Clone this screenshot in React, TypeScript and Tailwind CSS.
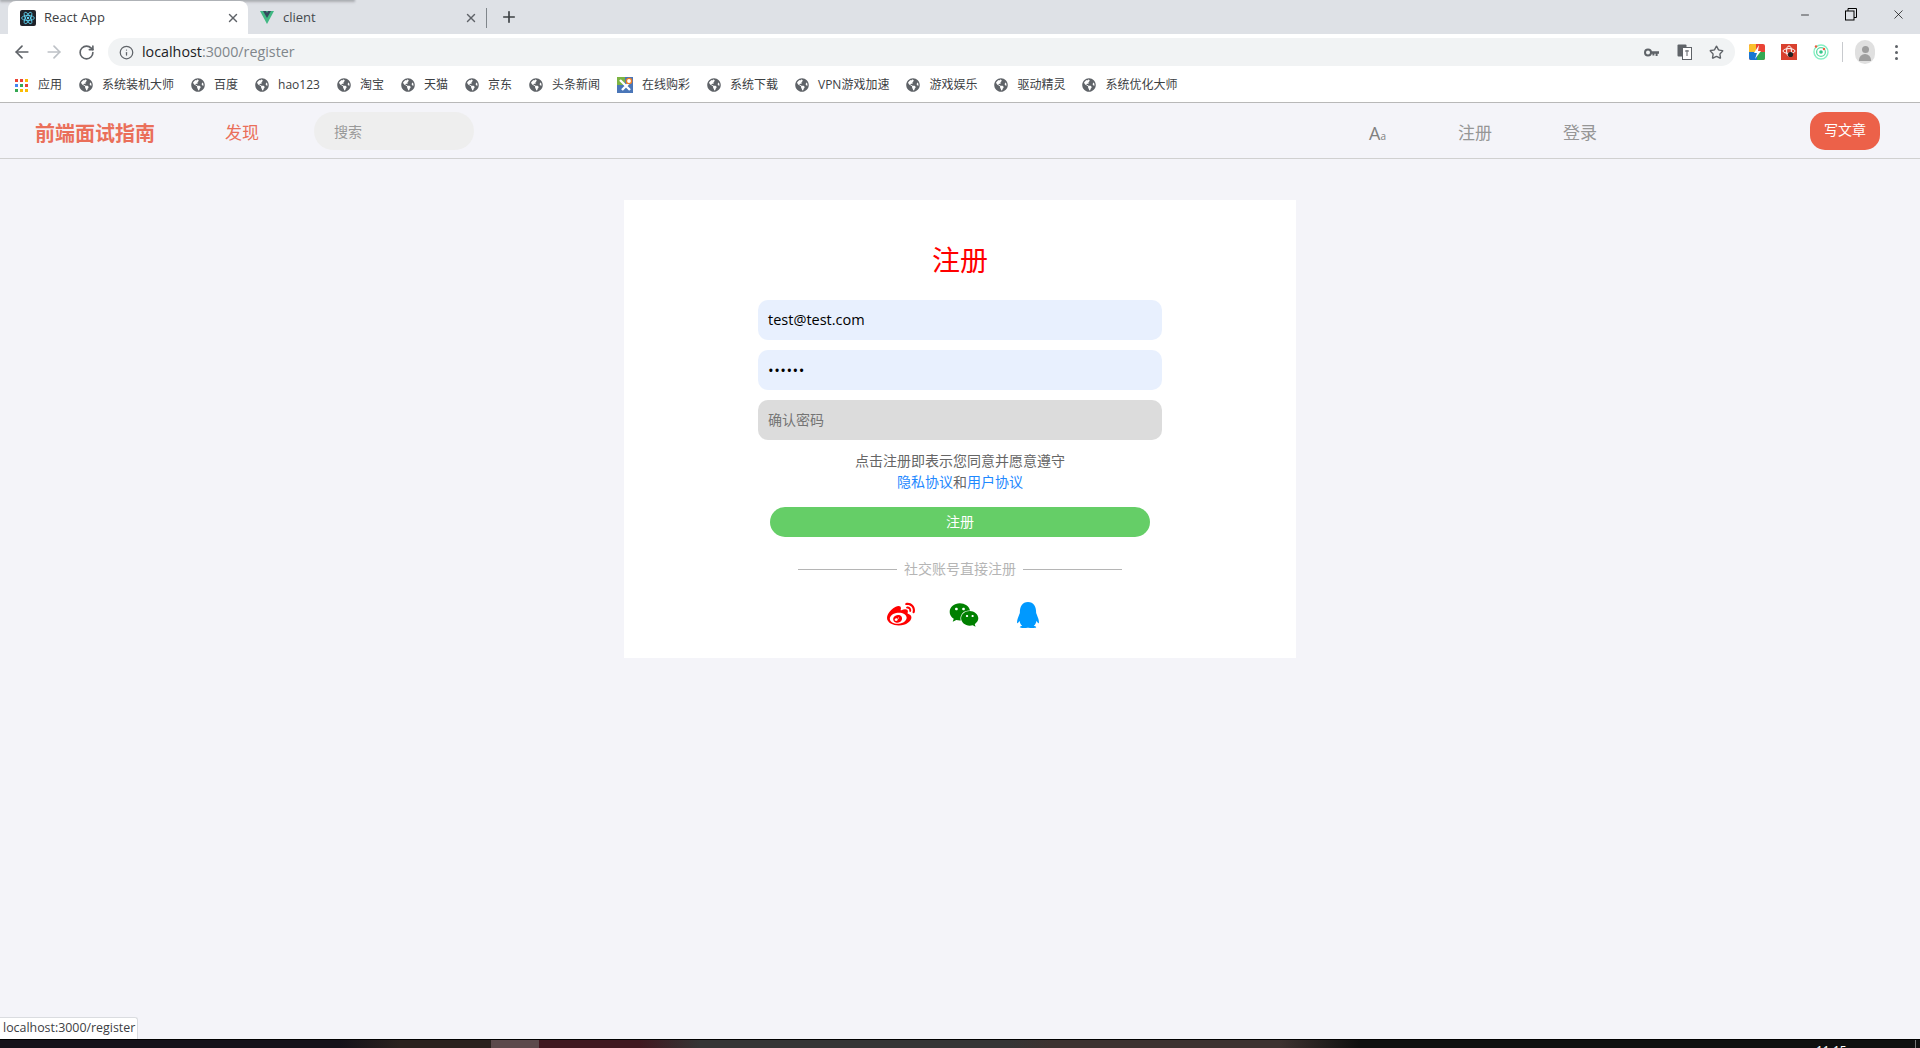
import { FaGlobeAmericas, FaWeibo, FaWeixin, FaQq } from "react-icons/fa";
import { ArrowLeft, ArrowRight, RotateCw, Info, Star, X, Plus, Minus } from "lucide-react";

const bookmarks = ["系统装机大师", "百度", "hao123", "淘宝", "天猫", "京东", "头条新闻", "在线购彩", "系统下载", "VPN游戏加速", "游戏娱乐", "驱动精灵", "系统优化大师"];

const font = "font-['Open_Sans','Noto_Sans_CJK_SC',sans-serif]";

function AppsGrid() {
  const colors = ["#ea4335", "#ea4335", "#fbbc05", "#4285f4", "#34a853", "#ea4335", "#34a853", "#fbbc05", "#fbbc05"];
  return (
    <div className="grid grid-cols-3 gap-[2px] w-[13px] h-[13px]">
      {colors.map((c, i) => (
        <div key={i} className="w-[3px] h-[3px]" style={{ background: c }} />
      ))}
    </div>
  );
}

function ReactIcon() {
  return (
    <svg width="16" height="16" viewBox="0 0 16 16" className="shrink-0">
      <rect width="16" height="16" rx="2" fill="#20232a" />
      <g fill="none" stroke="#61dafb" strokeWidth="0.8">
        <ellipse cx="8" cy="8" rx="6.4" ry="2.5" />
        <ellipse cx="8" cy="8" rx="6.4" ry="2.5" transform="rotate(60 8 8)" />
        <ellipse cx="8" cy="8" rx="6.4" ry="2.5" transform="rotate(120 8 8)" />
      </g>
      <circle cx="8" cy="8" r="1.2" fill="#61dafb" />
    </svg>
  );
}

function VueIcon() {
  return (
    <svg width="14" height="13" viewBox="0 0 14 13" className="shrink-0">
      <path d="M0 0h14L7 13z" fill="#41b883" />
      <path d="M3 0h3l1 2 1-2h3L7 7z" fill="#34495e" />
    </svg>
  );
}

function ColorBookmark() {
  return (
    <svg width="16" height="16" viewBox="0 0 16 16" className="shrink-0">
      <rect width="16" height="16" fill="#4a76b8" />
      <path d="M0 0h8v8H0z" fill="#7cb342" />
      <path d="M3 3l10 10M13 5L5 13" stroke="#fff" strokeWidth="2.4" />
      <circle cx="12" cy="4" r="2.6" fill="#fff" stroke="#ef7d22" strokeWidth="1.4" />
    </svg>
  );
}

function KeyIcon() {
  return (
    <svg width="15" height="9" viewBox="0 0 15 9" className="shrink-0">
      <circle cx="4" cy="4.5" r="3" fill="none" stroke="#5f6368" strokeWidth="2" />
      <path d="M6.5 3.2H15v2.6h-1.4v2.2h-2V5.8h-1.2v1.6h-2V5.8H6.5z" fill="#5f6368" />
    </svg>
  );
}

function Extensions() {
  return (
    <div className="flex items-center gap-4">
      <svg width="16" height="16" viewBox="0 0 16 16">
        <rect width="16" height="16" rx="2" fill="#ea4335" />
        <path d="M0 2a2 2 0 0 1 2-2h5v8H0z" fill="#fbc02d" />
        <path d="M0 8h8v8H2a2 2 0 0 1-2-2z" fill="#1976d2" />
        <path d="M8 8h8v6a2 2 0 0 1-2 2H8z" fill="#34a853" />
        <path d="M10 1L5 9h3l-2 6 6-8H9z" fill="#fff" />
      </svg>
      <svg width="16" height="16" viewBox="0 0 16 16">
        <rect width="16" height="16" fill="#d9412f" />
        <g fill="none" stroke="#fff" strokeWidth="1">
          <ellipse cx="8" cy="7" rx="6" ry="2.4" />
          <ellipse cx="8" cy="7" rx="2.4" ry="5" />
        </g>
        <circle cx="9.5" cy="10.5" r="2.6" fill="#222" />
      </svg>
      <svg width="16" height="16" viewBox="0 0 16 16">
        <circle cx="8" cy="8" r="7" fill="none" stroke="#86f0c4" strokeWidth="1.4" />
        <circle cx="8" cy="8" r="4.4" fill="none" stroke="#5fdca4" strokeWidth="1.3" />
        <circle cx="8" cy="8" r="1.8" fill="#35c58a" />
        <circle cx="3" cy="2.5" r="1.2" fill="#ef5a3c" />
        <circle cx="11" cy="5" r="1.2" fill="#ef5a3c" />
      </svg>
    </div>
  );
}

function BrowserChrome() {
  return (
    <div className={`${font} shrink-0`}>
      {/* tab strip */}
      <div className="relative h-[34px] bg-[#dee1e6] flex items-end pl-2 overflow-hidden">
        <div className="absolute left-0 -top-px w-[355px] h-[4px] bg-gradient-to-b from-[#85878b] to-transparent blur-[1px]" />
        <div className="relative w-[240px] h-[33px] bg-white rounded-t-lg flex items-center pl-[12px] pr-[8px]">
          <ReactIcon />
          <span className="ml-[8px] text-[13px] text-[#3c4043] flex-1">React App</span>
          <X size={14} strokeWidth={2.4} className="text-[#5f6368]" />
        </div>
        <div className="w-[238px] h-[33px] flex items-center pl-[12px] pr-[8px]">
          <VueIcon />
          <span className="ml-[9px] text-[13px] text-[#45494e] flex-1">client</span>
          <X size={14} strokeWidth={2.4} className="text-[#5f6368]" />
        </div>
        <div className="w-px h-5 bg-[#80868b] mb-[6px]" />
        <Plus size={18} strokeWidth={2.2} className="ml-[13px] mb-[8px] text-[#3c4043]" />
        <div className="flex-1" />
        <div className="flex items-center self-start mt-[7px] gap-[34px] pr-[14px]">
          <Minus size={12} strokeWidth={1.4} className="text-black" />
          <svg width="12" height="13" viewBox="0 0 12 13" fill="none" stroke="#000" strokeWidth="1">
            <rect x="0.5" y="3" width="8.5" height="9" />
            <path d="M3 3V0.5h8.5V9.5H9" />
          </svg>
          <X size={15} strokeWidth={1.1} className="text-black" />
        </div>
      </div>
      {/* address bar */}
      <div className="h-[32px] bg-white flex items-end">
        <div className="flex items-center w-[108px] h-[28px] pl-[6px]">
          <div className="w-[32px] flex justify-center">
            <ArrowLeft size={20} strokeWidth={2} className="text-[#5f6368]" />
          </div>
          <div className="w-[32px] flex justify-center">
            <ArrowRight size={20} strokeWidth={2} className="text-[#bdc1c6]" />
          </div>
          <div className="w-[32px] flex justify-center">
            <RotateCw size={17} strokeWidth={2.3} className="text-[#5f6368]" />
          </div>
        </div>
        <div className="w-[1627px] h-[28px] bg-[#f1f3f4] rounded-full flex items-center pl-[11px] pr-[11px]">
          <Info size={15} strokeWidth={2} className="text-[#5f6368]" />
          <span className="ml-[8px] pb-px text-[14.3px] text-[#202124] flex-1">
            localhost<span className="text-[#80868b]">:3000/register</span>
          </span>
          <KeyIcon />
          <svg width="15" height="16" viewBox="0 0 15 16" className="ml-[18px]">
            <rect x="0.5" y="0.5" width="9" height="12" rx="1" fill="#5f6368" />
            <rect x="5.5" y="3.5" width="9" height="12" fill="#fff" stroke="#5f6368" />
            <path d="M8 7h4M10 6v6" stroke="#5f6368" />
          </svg>
          <Star size={15} strokeWidth={2.2} className="ml-[17px] text-[#5f6368]" />
        </div>
        <div className="h-[28px] flex items-center pl-[14px]">
          <Extensions />
          <div className="w-px h-5 bg-[#c8cace] ml-[13px]" />
          <div className="ml-[12px] w-[20px] h-[24px] rounded-full bg-[#e0e0e0] flex flex-col items-center justify-end overflow-hidden">
            <div className="w-[7px] h-[7px] rounded-full bg-[#9e9e9e] mb-px" />
            <div className="w-[12px] h-[7px] rounded-t-full bg-[#9e9e9e] mb-[3px]" />
          </div>
          <div className="ml-[20px] flex flex-col gap-[3px]">
            <div className="w-[3px] h-[3px] rounded-full bg-[#5f6368]" />
            <div className="w-[3px] h-[3px] rounded-full bg-[#5f6368]" />
            <div className="w-[3px] h-[3px] rounded-full bg-[#5f6368]" />
          </div>
        </div>
      </div>
      {/* bookmarks */}
      <div className="h-[37px] pt-[2px] bg-white border-b border-[#b8b8b8] flex items-center pl-[15px] text-[12px] text-[#3c4043] gap-[17px]">
        <div className="flex items-center gap-[10px]">
          <AppsGrid />
          <span>应用</span>
        </div>
        {bookmarks.map((b) => (
          <div key={b} className="flex items-center gap-[9px]">
            {b === "在线购彩" ? <ColorBookmark /> : <FaGlobeAmericas size={14} className="text-[#5f6368]" />}
            <span>{b}</span>
          </div>
        ))}
      </div>
    </div>
  );
}

function Header() {
  return (
    <header className="h-[56px] shrink-0 border-b border-[#d0d0d0] flex items-center pl-[35px] pr-[40px]">
      <span className="pt-[6px] text-[20px] font-bold text-[#ea6f5a] w-[190px]">前端面试指南</span>
      <span className="pt-[4px] text-[17px] text-[#ea6f5a] w-[89px]">发现</span>
      <div className="w-[160px] h-[38px] rounded-full bg-[#eeeeee] flex items-center pl-[20px] pt-[2px] text-[14px] text-[#999999]">
        搜索
      </div>
      <div className="flex-1" />
      <span className="pt-[4px] text-[18px] text-[#808080] leading-none w-[89px]">
        A<span className="text-[10px]">a</span>
      </span>
      <span className="pt-[4px] text-[17px] text-[#969696] w-[105px]">注册</span>
      <span className="pt-[4px] text-[17px] text-[#969696] w-[247px]">登录</span>
      <button className="w-[70px] h-[38px] pb-[2px] rounded-[15px] bg-[#ec6149] text-white text-[14px]">写文章</button>
    </header>
  );
}

function RegisterCard() {
  return (
    <div className="w-[672px] h-[458px] bg-white mx-auto mt-[41px] flex flex-col items-center pt-[40px]">
      <h1 className="text-[28px] leading-[40px] text-[#ff0000] font-normal">注册</h1>
      <div className="mt-[20px] flex flex-col gap-[10px] w-[404px]">
        <div className="h-[40px] pb-px rounded-[10px] bg-[#e8f0fe] flex items-center pl-[10px] text-[14.5px] text-black">test@test.com</div>
        <div className="h-[40px] rounded-[10px] bg-[#e8f0fe] flex items-center pl-[10px] text-[15px] text-black tracking-[0.5px]">••••••</div>
        <div className="h-[40px] pb-[2px] rounded-[10px] bg-[#dcdcdc] flex items-center pl-[10px] text-[14px] text-[#757575]">确认密码</div>
      </div>
      <p className="mt-[10px] text-[14px] leading-[21px] text-[#666666] text-center">
        点击注册即表示您同意并愿意遵守
        <br />
        <span className="text-[#1e88ff]">隐私协议</span>和<span className="text-[#1e88ff]">用户协议</span>
      </p>
      <button className="mt-[15px] w-[380px] h-[30px] pb-[2px] rounded-full bg-[#65ce67] text-white text-[14px]">注册</button>
      <div className="mt-[21px] flex items-center gap-[7px] text-[14px] text-[#b5b5b5]">
        <div className="w-[99px] h-px bg-[#b5b5b5]" />
        <span className="pb-[2px]">社交账号直接注册</span>
        <div className="w-[99px] h-px bg-[#b5b5b5]" />
      </div>
      <div className="mt-[19px] ml-[8px] flex items-center">
        <FaWeibo size={28} className="text-[#ff0000]" />
        <FaWeixin size={30} className="ml-[34px] text-[#008000]" />
        <FaQq size={26} className="ml-[36px] text-[#0099ff]" />
      </div>
    </div>
  );
}

export default function App() {
  return (
    <div className={`${font} relative w-[1920px] h-[1048px] overflow-hidden bg-[#f4f4f9] flex flex-col`}>
      <BrowserChrome />
      <Header />
      <main className="flex-1">
        <RegisterCard />
      </main>
      {/* status bubble */}
      <div className="absolute left-0 bottom-[9px] h-[22px] w-[138px] bg-white border-t border-r border-[#dadce0] rounded-tr-[3px] flex items-center pl-[3px] text-[12.4px] text-[#3c4043]">
        localhost:3000/register
      </div>
      {/* taskbar peeking out at the bottom */}
      <div className="absolute left-0 right-0 bottom-0 h-[9px] overflow-hidden border-t border-black bg-[linear-gradient(to_right,#15121a_0,#15121a_340px,#2a221e_400px,#2a221e_491px,#401820_539px,#401820_640px,#353535_700px,#353535_1010px,#3d3230_1050px,#3d3230_1280px,#0f100f_1360px,#0f100f_100%)]">
        <div className="absolute left-[491px] top-0 w-[48px] h-full bg-[#5c4a4c]" />
        <span className="absolute left-[1816px] top-[5px] text-[12px] leading-none text-white">11:15</span>
        <div className="absolute left-[1915px] top-0 w-px h-full bg-[#777777]" />
      </div>
    </div>
  );
}
